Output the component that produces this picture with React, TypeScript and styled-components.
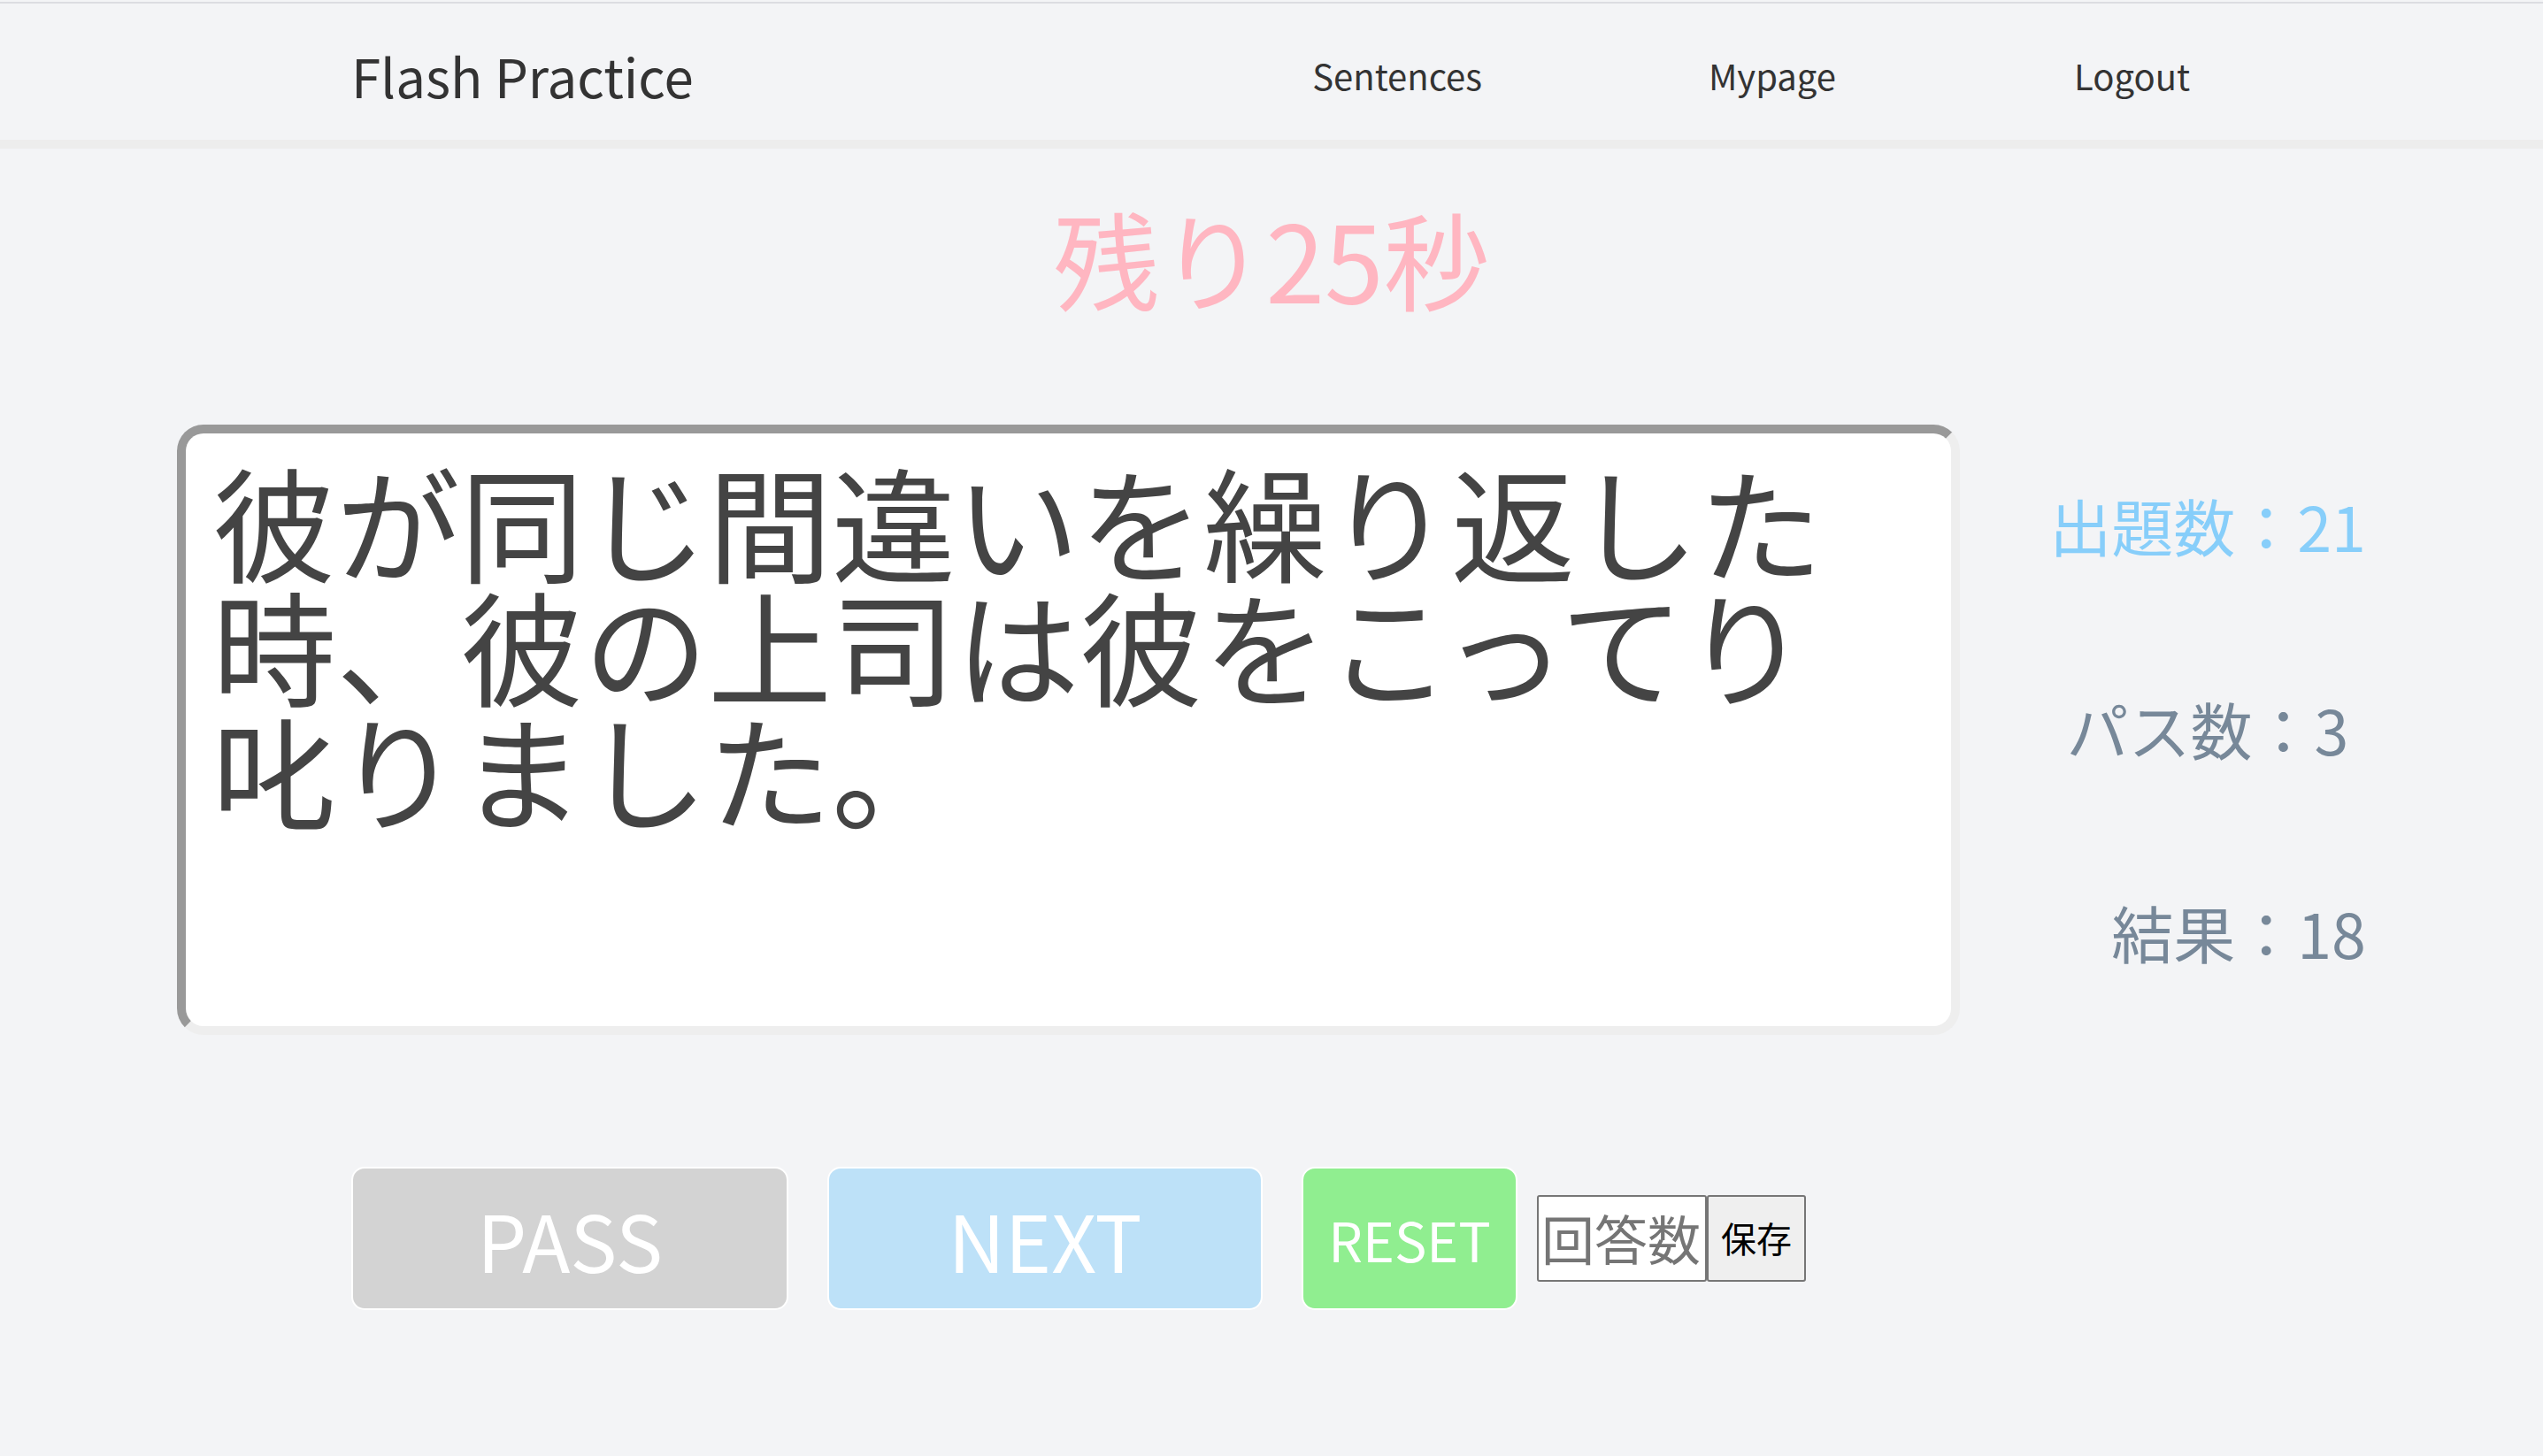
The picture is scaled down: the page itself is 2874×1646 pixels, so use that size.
import React from "react";
import styled, { createGlobalStyle } from "styled-components";

const GlobalStyle = createGlobalStyle`
  html, body {
    margin: 0;
    padding: 0;
    background: #f3f4f6;
  }
  body {
    font-family: "Noto Sans CJK JP", "Noto Sans", sans-serif;
  }
  * { box-sizing: border-box; }
`;

const Page = styled.div`
  min-height: 1646px;
  padding-top: 2px;
  background: #f3f4f6;
`;

const Header = styled.header`
  display: flex;
  align-items: center;
  justify-content: space-between;
  box-sizing: content-box;
  height: 147px;
  padding: 7px 399px 0 397px;
  border-top: 2px solid #dcdde1;
  border-bottom: 10px solid #ededed;
`;

const Brand = styled.div`
  font-size: 60px;
  color: #333;
`;

const Nav = styled.nav`
  display: grid;
  grid-template-columns: repeat(3, 400px);
  justify-items: end;
`;

const NavLink = styled.a`
  font-size: 40px;
  color: #333;
  text-decoration: none;
  cursor: pointer;
`;

const Timer = styled.div`
  margin-top: 36px;
  font-size: 120px;
  color: #ffb6c1;
  text-align: center;
`;

const Main = styled.main`
  display: flex;
  margin-top: 102px;
  padding-left: 200px;
`;

const Card = styled.div`
  width: 2015px;
  height: 690px;
  padding: 27px 24px 27px 30px;
  background: #fff;
  border: 10px solid;
  border-color: #999 #eee #eee #999;
  border-radius: 30px;
  font-size: 140px;
  line-height: 140px;
  color: #444;
`;

const Stats = styled.div`
  width: 560px;
  display: flex;
  flex-direction: column;
  justify-content: center;
  align-items: center;
  gap: 129px;
  padding-bottom: 4px;
`;

const Stat = styled.div<{ $accent?: boolean }>`
  font-size: 70px;
  color: ${(p) => (p.$accent ? "#87cefa" : "#778899")};
  white-space: pre;
`;

const Actions = styled.div`
  display: flex;
  align-items: center;
  gap: 22px;
  margin-top: 149px;
  padding-left: 397px;
`;

const MainButtons = styled.div`
  display: flex;
  gap: 44px;
`;

const ActionButton = styled.button<{ $bg: string; $w: number; $size: number }>`
  width: ${(p) => p.$w}px;
  height: 162px;
  background: ${(p) => p.$bg};
  border: 2px solid #fff;
  border-radius: 15px;
  color: #fff;
  font-family: inherit;
  font-size: ${(p) => p.$size}px;
  padding: 0;
  cursor: pointer;
`;

const AnswerForm = styled.form`
  display: flex;
  align-items: stretch;
  height: 98px;
`;

const AnswerInput = styled.input`
  width: 192px;
  height: 98px;
  padding: 0 3px 4px;
  border: 2px solid #767676;
  border-radius: 3px;
  background: #fff;
  font-family: inherit;
  font-size: 60px;
  color: #333;
  &::placeholder {
    color: #757575;
  }
`;

const SaveButton = styled.button`
  width: 112px;
  height: 98px;
  padding: 0 0 2px;
  background: #efefef;
  border: 2px solid #767676;
  border-radius: 3px;
  font-family: inherit;
  font-size: 40px;
  color: #000;
  cursor: pointer;
`;

export default function App() {
  return (
    <>
      <GlobalStyle />
      <Page>
        <Header>
          <Brand>Flash Practice</Brand>
          <Nav>
            <NavLink>Sentences</NavLink>
            <NavLink>Mypage</NavLink>
            <NavLink>Logout</NavLink>
          </Nav>
        </Header>
        <Timer>残り25秒</Timer>
        <Main>
          <Card>彼が同じ間違いを繰り返した時、彼の上司は彼をこってり叱りました。</Card>
          <Stats>
            <Stat $accent>出題数：21</Stat>
            <Stat>パス数：3</Stat>
            <Stat>{"　結果：18"}</Stat>
          </Stats>
        </Main>
        <Actions>
          <MainButtons>
            <ActionButton $bg="#d3d3d3" $w={494} $size={89}>PASS</ActionButton>
            <ActionButton $bg="#bde1f8" $w={492} $size={89}>NEXT</ActionButton>
            <ActionButton $bg="#90ee90" $w={244} $size={61}>RESET</ActionButton>
          </MainButtons>
          <AnswerForm onSubmit={(e) => e.preventDefault()}>
            <AnswerInput placeholder="回答数" />
            <SaveButton type="submit">保存</SaveButton>
          </AnswerForm>
        </Actions>
      </Page>
    </>
  );
}
